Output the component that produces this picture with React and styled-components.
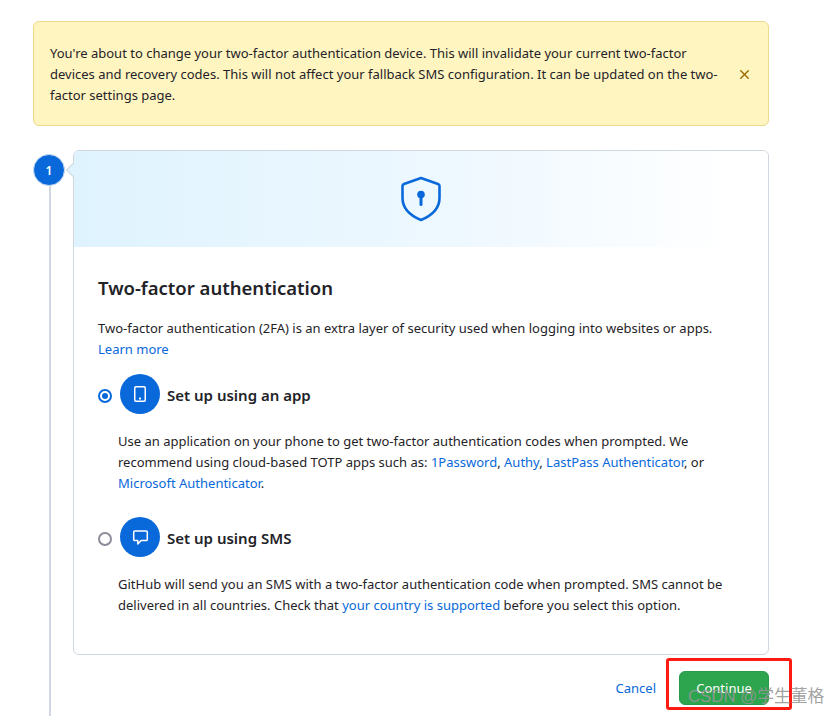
import React from 'react';
import styled, { createGlobalStyle } from 'styled-components';
import { X } from 'lucide-react';

const GlobalStyle = createGlobalStyle`
  html, body {
    margin: 0;
    padding: 0;
    background: #fff;
    height: 100%;
    overflow: hidden;
  }
  body {
    font-family: "Noto Sans", "Open Sans", sans-serif;
    font-size: 13px;
    color: #1f2328;
  }
`;

const Page = styled.div`
  position: relative;
  width: 840px;
  height: 716px;
  overflow: hidden;
  box-sizing: border-box;
  padding: 21px 71px 0 33px;
`;

const Alert = styled.div`
  display: flex;
  align-items: center;
  justify-content: space-between;
  box-sizing: border-box;
  height: 105px;
  padding: 2px 17px 0 16px;
  background: #fff5c1;
  border: 1px solid #ecd98a;
  border-radius: 6px;
  line-height: 21px;
`;

const AlertText = styled.div`
  width: 672px;
`;

const AlertClose = styled.span`
  display: flex;
  margin-right: -1px;
  color: #9a6700;
`;

const Timeline = styled.div`
  display: flex;
  margin-top: 24px;
`;

const Rail = styled.div`
  display: flex;
  flex-direction: column;
  width: 32px;
  margin-right: 8px;
  padding-top: 4px;
`;

const StepDot = styled.div`
  display: flex;
  align-items: center;
  justify-content: center;
  box-sizing: border-box;
  width: 32px;
  height: 32px;
  flex: none;
  border-radius: 50%;
  background: #0969da;
  border: 1px solid #c9d9ee;
  color: #fff;
  font-size: 12px;
  font-weight: 600;
`;

const StepLine = styled.div`
  width: 2px;
  height: 560px;
  margin-left: 16px;
  background: #d0d7e3;
`;

const Column = styled.div`
  flex: 1;
  min-width: 0;
`;

const Card = styled.div`
  position: relative;
  box-sizing: border-box;
  height: 505px;
  border: 1px solid #d0d7de;
  border-radius: 6px;
  background: #fff;

  &::before {
    content: '';
    position: absolute;
    left: -6px;
    top: 14px;
    width: 10px;
    height: 10px;
    transform: rotate(45deg);
    background: #dff3fe;
    border-left: 1px solid #d0d7de;
    border-bottom: 1px solid #d0d7de;
    box-sizing: border-box;
  }
`;

const CardHero = styled.div`
  position: relative;
  display: flex;
  align-items: center;
  justify-content: center;
  height: 96px;
  border-radius: 5px 5px 0 0;
  background: linear-gradient(90deg, #dff3fe 0%, #eef8ff 55%, #ffffff 95%);
  color: #0969da;
`;

const CardBody = styled.div`
  padding: 28px 24px 0;
`;

const Title = styled.h2`
  margin: 0 0 17px;
  font-size: 18.5px;
  line-height: 26px;
  font-weight: 600;
`;

const Paragraph = styled.p`
  margin: 0;
  line-height: 21px;
`;

const Link = styled.a`
  color: #0969da;
  text-decoration: none;
`;

const Option = styled.div`
  margin-top: ${({ $first }) => ($first ? '14px' : '23px')};
`;

const OptionHead = styled.div`
  display: flex;
  align-items: center;
`;

const Radio = styled.span`
  display: flex;
  align-items: center;
  justify-content: center;
  box-sizing: border-box;
  width: 14px;
  height: 14px;
  margin: 3px 8px 0 0;
  border-radius: 50%;
  background: #fff;
  border: 2px solid ${({ $checked }) => ($checked ? '#0969da' : '#8c8c9a')};

  &::after {
    content: '';
    display: ${({ $checked }) => ($checked ? 'block' : 'none')};
    width: 6px;
    height: 6px;
    border-radius: 50%;
    background: #0969da;
  }
`;

const IconCircle = styled.span`
  display: flex;
  align-items: center;
  justify-content: center;
  width: 40px;
  height: 40px;
  border-radius: 50%;
  background: #0969da;
  color: #fff;
`;

const OptionTitle = styled.span`
  margin: 2px 0 0 7px;
  font-size: 15px;
  font-weight: 600;
`;

const OptionText = styled(Paragraph)`
  margin: 17px 0 0 20px;
`;

const Footer = styled.div`
  display: flex;
  align-items: center;
  justify-content: flex-end;
  margin-top: 16px;
`;

const CancelLink = styled(Link)`
  margin-right: 23px;
`;

const ContinueButton = styled.button`
  width: 90px;
  height: 34px;
  padding: 0;
  font: inherit;
  font-weight: 400;
  color: #fff;
  background: #2da44e;
  border: 1px solid #2a9b4a;
  border-radius: 6px;
`;

const Annotation = styled.div`
  position: absolute;
  left: 666px;
  top: 658px;
  width: 126px;
  height: 52px;
  box-sizing: border-box;
  border: 3px solid #ff1a12;
  border-radius: 3px;
  pointer-events: none;
`;

const Watermark = styled.div`
  position: absolute;
  left: 688px;
  top: 686px;
  font-family: "Liberation Sans", "Noto Sans CJK SC", sans-serif;
  font-size: 16.8px;
  line-height: 22px;
  white-space: nowrap;
  color: rgba(150, 150, 150, 0.9);
  pointer-events: none;
`;

const ShieldIcon = () => (
  <svg width="42" height="46" viewBox="0 0 42 46" fill="none">
    <path
      d="M21 2 L38 8 C39 8.4 39.5 9 39.5 10 V22 C39.5 32 32 39.5 21 44 C10 39.5 2.5 32 2.5 22 V10 C2.5 9 3 8.4 4 8 Z"
      stroke="currentColor"
      strokeWidth="2.6"
      strokeLinejoin="round"
    />
    <circle cx="21" cy="18.5" r="3.8" fill="currentColor" />
    <rect x="19.5" y="19" width="3" height="11" rx="1.5" fill="currentColor" />
  </svg>
);

const PhoneIcon = () => (
  <svg width="14" height="18" viewBox="0 0 14 18" fill="none">
    <rect x="1.75" y="1.75" width="10.5" height="14.5" rx="1.2" stroke="currentColor" strokeWidth="1.5" />
    <rect x="6" y="12.4" width="2" height="2" rx="0.5" fill="currentColor" />
  </svg>
);

const BubbleIcon = () => (
  <svg width="17" height="17" viewBox="0 0 17 17" fill="none">
    <path
      d="M2.8 2 H14.2 C14.9 2 15.3 2.4 15.3 3.1 V10.4 C15.3 11.1 14.9 11.5 14.2 11.5 H9.2 L5.8 14.9 V11.5 H2.8 C2.1 11.5 1.7 11.1 1.7 10.4 V3.1 C1.7 2.4 2.1 2 2.8 2 Z"
      stroke="currentColor"
      strokeWidth="1.5"
      strokeLinejoin="round"
    />
  </svg>
);

export default function App() {
  return (
    <Page>
      <GlobalStyle />
      <Alert>
        <AlertText>
          You're about to change your two-factor authentication device. This will
          invalidate your current two-factor devices and recovery codes. This will
          not affect your fallback SMS configuration. It can be updated on the
          two-factor settings page.
        </AlertText>
        <AlertClose>
          <X size={15} strokeWidth={2.2} />
        </AlertClose>
      </Alert>
      <Timeline>
        <Rail>
          <StepDot>1</StepDot>
          <StepLine />
        </Rail>
        <Column>
          <Card>
            <CardHero>
              <ShieldIcon />
            </CardHero>
            <CardBody>
              <Title>Two-factor authentication</Title>
              <Paragraph>
                Two-factor authentication (2FA) is an extra layer of security used
                when logging into websites or apps. <Link href="#">Learn more</Link>
              </Paragraph>
              <Option $first>
                <OptionHead>
                  <Radio $checked />
                  <IconCircle>
                    <PhoneIcon />
                  </IconCircle>
                  <OptionTitle>Set up using an app</OptionTitle>
                </OptionHead>
                <OptionText>
                  Use an application on your phone to get two-factor authentication
                  codes when prompted. We recommend using cloud-based TOTP apps such
                  as: <Link href="#">1Password</Link>, <Link href="#">Authy</Link>,{' '}
                  <Link href="#">LastPass Authenticator</Link>, or{' '}
                  <Link href="#">Microsoft Authenticator</Link>.
                </OptionText>
              </Option>
              <Option>
                <OptionHead>
                  <Radio />
                  <IconCircle>
                    <BubbleIcon />
                  </IconCircle>
                  <OptionTitle>Set up using SMS</OptionTitle>
                </OptionHead>
                <OptionText>
                  GitHub will send you an SMS with a two-factor authentication code
                  when prompted. SMS cannot be delivered in all countries. Check that{' '}
                  <Link href="#">your country is supported</Link> before you select
                  this option.
                </OptionText>
              </Option>
            </CardBody>
          </Card>
          <Footer>
            <CancelLink href="#">Cancel</CancelLink>
            <ContinueButton>Continue</ContinueButton>
          </Footer>
        </Column>
      </Timeline>
      <Annotation />
      <Watermark>CSDN @学生董格</Watermark>
    </Page>
  );
}
